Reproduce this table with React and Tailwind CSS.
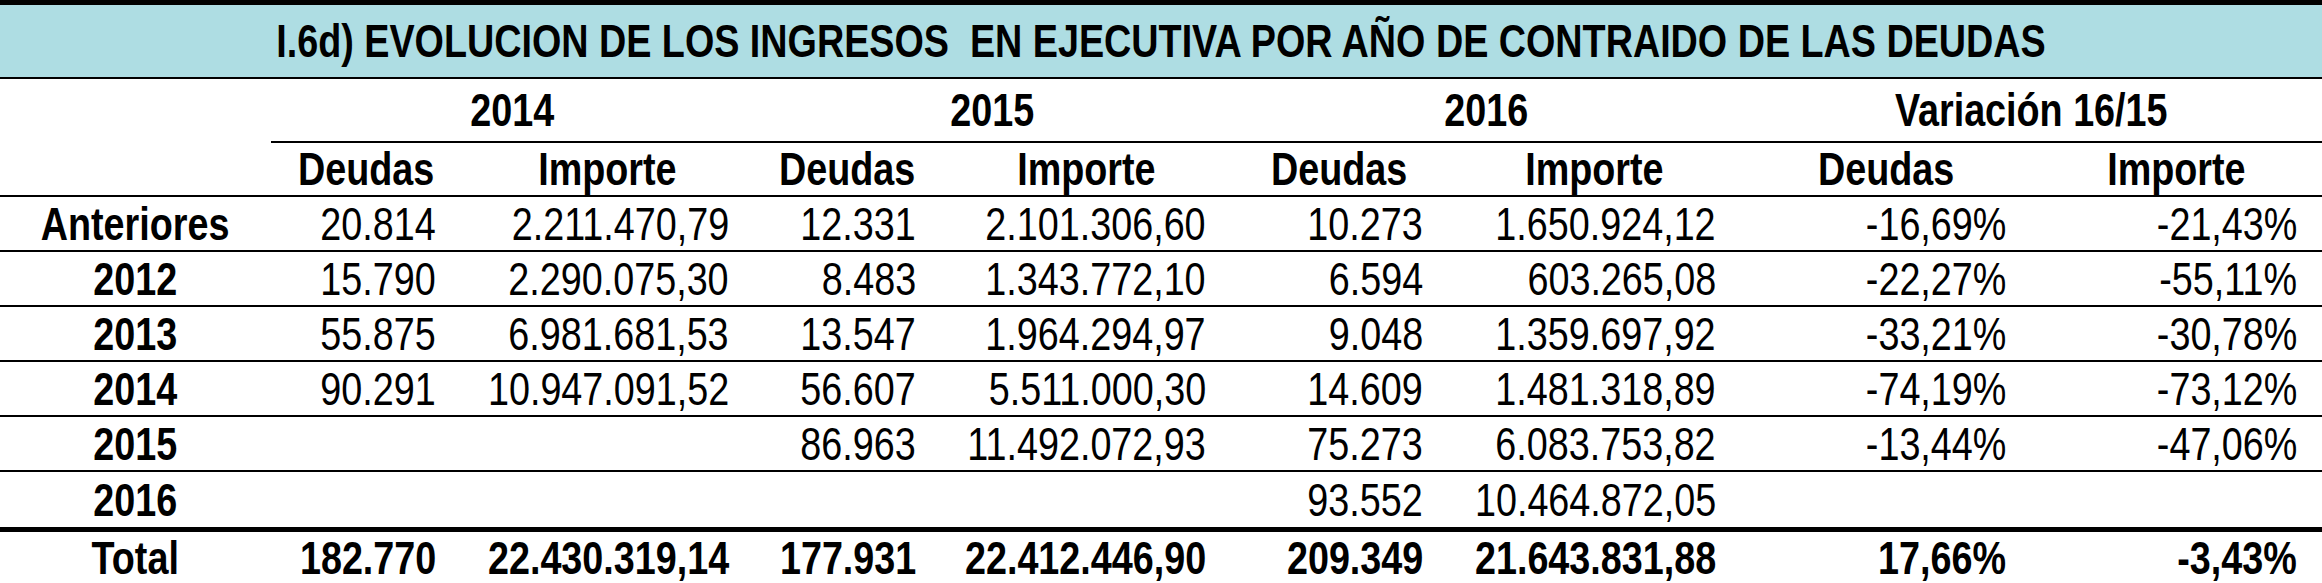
import React from "react";

const cols = "grid grid-cols-[271px_190px_293px_187px_290px_217px_293px_290px_291px]";

const rows = [
  ["Anteriores", "20.814", "2.211.470,79", "12.331", "2.101.306,60", "10.273", "1.650.924,12", "-16,69%", "-21,43%"],
  ["2012", "15.790", "2.290.075,30", "8.483", "1.343.772,10", "6.594", "603.265,08", "-22,27%", "-55,11%"],
  ["2013", "55.875", "6.981.681,53", "13.547", "1.964.294,97", "9.048", "1.359.697,92", "-33,21%", "-30,78%"],
  ["2014", "90.291", "10.947.091,52", "56.607", "5.511.000,30", "14.609", "1.481.318,89", "-74,19%", "-73,12%"],
  ["2015", "", "", "86.963", "11.492.072,93", "75.273", "6.083.753,82", "-13,44%", "-47,06%"],
  ["2016", "", "", "", "", "93.552", "10.464.872,05", "", ""],
];

const total = ["Total", "182.770", "22.430.319,14", "177.931", "22.412.446,90", "209.349", "21.643.831,88", "17,66%", "-3,43%"];

// no narrow face installed, so squeeze the sans horizontally
const Narrow = ({ children, right }) => (
  <span className={`inline-block whitespace-pre scale-x-[0.82] ${right ? "origin-right" : "origin-center"}`}>
    {children}
  </span>
);

const Row = ({ cells, bold, className }) => (
  <div className={`${cols} ${className}`}>
    {cells.map((c, i) =>
      i === 0 ? (
        <div key={i} className="flex items-center justify-center font-bold">
          <Narrow>{c}</Narrow>
        </div>
      ) : (
        <div key={i} className={`flex items-center justify-end pr-[25px] ${bold ? "font-bold" : ""}`}>
          {c && <Narrow right>{c}</Narrow>}
        </div>
      )
    )}
  </div>
);

export default function App() {
  return (
    <div className="w-[2322px] h-[583px] overflow-hidden bg-white text-black font-['Liberation_Sans',Arial,sans-serif] text-[46px] leading-none">
      {/* Title */}
      <div className="h-[79px] border-t-[5px] border-b-2 border-black bg-[#aedde3] flex items-center justify-center">
        <span className="font-bold">
          <Narrow>I.6d) EVOLUCION DE LOS INGRESOS  EN EJECUTIVA POR AÑO DE CONTRAIDO DE LAS DEUDAS</Narrow>
        </span>
      </div>

      {/* Year header */}
      <div className={`${cols} h-[64px] font-bold`}>
        <div />
        <div className="col-span-2 border-b-2 border-black flex items-center justify-center"><Narrow>2014</Narrow></div>
        <div className="col-span-2 border-b-2 border-black flex items-center justify-center"><Narrow>2015</Narrow></div>
        <div className="col-span-2 border-b-2 border-black flex items-center justify-center"><Narrow>2016</Narrow></div>
        <div className="col-span-2 border-b-2 border-black flex items-center justify-center"><Narrow>Variación 16/15</Narrow></div>
      </div>

      {/* Sub header */}
      <div className={`${cols} h-[54px] border-b-2 border-black font-bold`}>
        <div />
        {["Deudas", "Importe", "Deudas", "Importe", "Deudas", "Importe", "Deudas", "Importe"].map((h, i) => (
          <div key={i} className="flex items-center justify-center">
            <Narrow>{h}</Narrow>
          </div>
        ))}
      </div>

      {rows.map((r, i) => (
        <Row
          key={i}
          cells={r}
          className={i === rows.length - 1 ? "h-[60px] border-b-[5px] border-black" : "h-[55px] border-b-2 border-black"}
        />
      ))}

      <Row cells={total} bold className="h-[51px]" />
    </div>
  );
}
